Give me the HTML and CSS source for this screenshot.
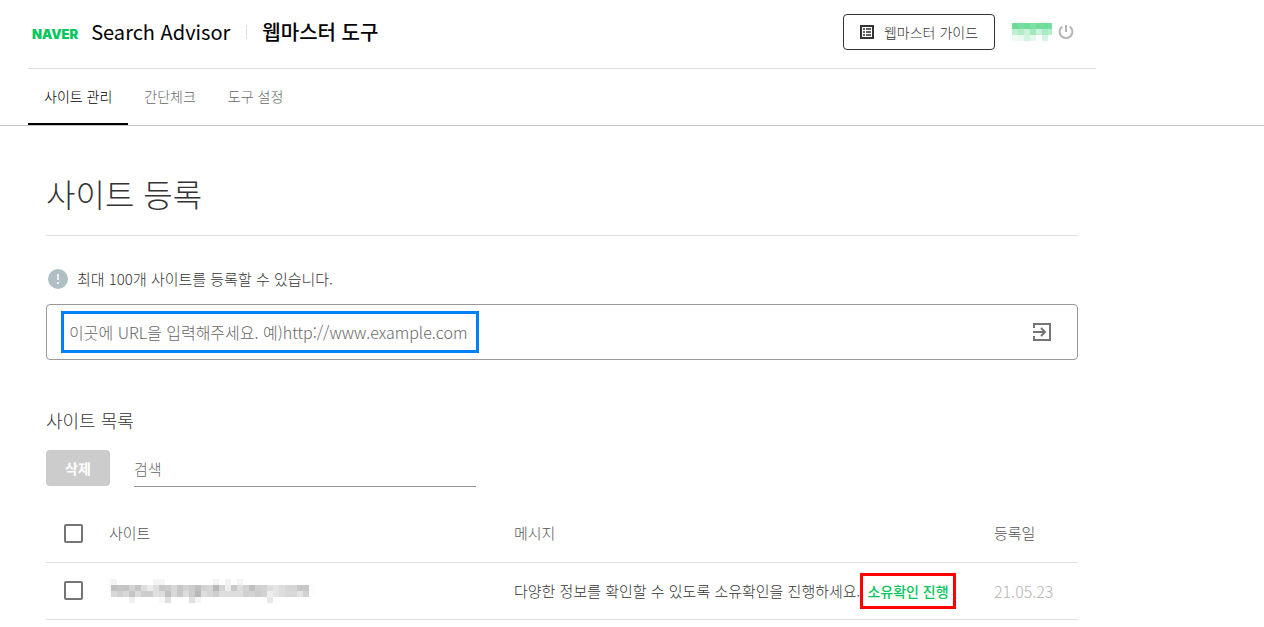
FILE: index.html
```
<!DOCTYPE html>
<html lang="ko">
<head>
    <meta charset="UTF-8">
    <meta name="viewport" content="width=device-width, initial-scale=1.0">
    <title>웹마스터 도구</title>
    <link rel="stylesheet" href="styles.css">
</head>
<body>
<header class="header">
    <div class="top-bar">
        <a class="logo" href="#">NAVER</a>
        <a class="service" href="#">Search Advisor</a>
        <a class="tool-name" href="#">웹마스터 도구</a>
        <button class="guide-btn" type="button">
            <svg width="14" height="14" viewBox="0 0 14 14" fill="none" stroke="#333" stroke-width="2">
                <path d="M1 1h12v12H1z"/>
                <path d="M3 4h2M6 4h5M3 7h2M6 7h5M3 10h2M6 10h5" stroke-width="1.5"/>
            </svg>
            웹마스터 가이드
        </button>
        <svg class="user-name" id="userName" width="40" height="18" viewBox="0 0 40 18" shape-rendering="crispEdges"></svg>
        <button class="power-btn" type="button" aria-label="로그아웃">
            <svg width="16" height="16" viewBox="0 0 16 16" fill="none" stroke="#b5b5b5" stroke-width="2">
                <path d="M8 1v7M4.300 2.500a6.400 6.400 0 1 0 7.400 0"/>
            </svg>
        </button>
    </div>
    <nav class="tabs">
        <a class="tab active" href="#">사이트 관리</a>
        <a class="tab" href="#">간단체크</a>
        <a class="tab" href="#">도구 설정</a>
    </nav>
</header>
<main class="container">
    <h1>사이트 등록</h1>
    <p class="notice">
        <svg width="23" height="22" viewBox="0 0 23 22">
            <circle cx="12" cy="11" r="10" fill="#b0bec5"/>
            <path d="M12 6v6M12 14v2" stroke="#fff" stroke-width="1.5"/>
        </svg>
        최대 100개 사이트를 등록할 수 있습니다.
    </p>
    <form class="url-form">
        <input class="url-input" type="text" aria-label="사이트 URL" placeholder="이곳에 URL을 입력해주세요. 예)http://www.example.com">
        <button class="submit-btn" type="button" aria-label="등록">
            <svg width="20" height="20" viewBox="0 0 20 20" fill="none" stroke="#757575" stroke-width="2">
                <path d="M2 6V2h16v16H2v-4M1 10h12M9 6l4 4-4 4"/>
            </svg>
        </button>
    </form>
    <h2>사이트 목록</h2>
    <div class="list-tools">
        <button class="delete-btn" type="button" disabled>삭제</button>
        <input class="search-input" type="text" aria-label="검색" placeholder="검색">
    </div>
    <table class="site-table">
        <thead>
            <tr>
                <th class="col-check"><input type="checkbox" aria-label="전체 선택"></th>
                <th class="col-site">사이트</th>
                <th class="col-message">메시지</th>
                <th>등록일</th>
            </tr>
        </thead>
        <tbody>
            <tr>
                <td class="col-check"><input type="checkbox" aria-label="사이트 선택"></td>
                <td>
                    <svg id="siteUrl" width="206" height="24" viewBox="4 0 206 24" shape-rendering="crispEdges"></svg>
                </td>
                <td class="message">다양한 정보를 확인할 수 있도록 소유확인을 진행하세요.<a class="verify" href="#">소유확인 진행</a></td>
                <td class="date">21.05.23</td>
            </tr>
        </tbody>
    </table>
</main>
<script>
    // 개인정보 모자이크: '-' 는 빈 칸
    const drawMosaic = (id, rows, toColor) => {
        const size = 6;
        document.getElementById(id).innerHTML = rows.map((row, y) =>
            row.split(' ').map((cell, x) => cell === '-' ? '' :
                `<rect x="${x * size}" y="${y * size}" width="${size}" height="${size}" fill="${toColor(cell)}"/>`
            ).join('')
        ).join('');
    };
    drawMosaic('siteUrl', [
        'fa f3 - - - - - - f5 f5 - - - - - - - - f3 - f3 - f3',
        'f8 c0 c5 c4 d3 c6 dd eb df c8 cc d8 c6 d2 cc bf d2 d6 b8 d4 ee c8 dd d2 c0 d0 d2 dd e5 dd d6 d6 c8 c8 fc',
        'fa d9 d0 d8 c4 dc cc cc e0 dd c0 d9 c8 de cc b8 dd d6 cc dd dd dd dd d0 d2 cc d2 ee e5 dd d8 d8 e4 d2 fd',
        '- - - - f0 - - - - f8 e0 - - - e0 f5 - - - - - - - - - - - e8'
    ], (cell) => '#' + cell + cell + cell);
    drawMosaic('userName', [
        '6dda96 76dea0 6fdc9a 7fe0a7 72dd9d 70dc9b 76dea0',
        'c0f0d3 b0ecc8 c8f2d8 a0e8bd c8f2d8 a8eac4 b4edca',
        'eefbf3 e8faef d0f5df e4f9ec - d4f5e1'
    ], (cell) => '#' + cell);
</script>
</body>
</html>
```
FILE: styles.css
```
* {
    box-sizing: border-box;
}
body {
    margin: 0;
    background: #fff;
    color: #333;
    font-family: 'Noto Sans CJK KR', sans-serif;
    font-weight: 300;
    font-size: 15px;
    line-height: 20px;
}
a {
    color: inherit;
    text-decoration: none;
}
button, input {
    font: inherit;
    color: inherit;
}
button {
    background: none;
    border: none;
    padding: 0;
    cursor: pointer;
}
.header {
    border-bottom: 1px solid #c4c4c4;
}
.top-bar {
    display: flex;
    align-items: center;
    max-width: 1068px;
    height: 69px;
    margin-left: 28px;
    padding: 0 22px 4px 4px;
    border-bottom: 1px solid #e0e0e0;
}
.logo {
    margin-right: 13px;
    padding-top: 4px;
    color: #03c75a;
    font-family: 'Inter', sans-serif;
    font-size: 13px;
    font-weight: 900;
}
.service, .tool-name {
    color: #000;
    font-size: 20px;
    font-weight: 400;
}
.tool-name {
    margin-left: 16px;
    padding-left: 16px;
    background: linear-gradient(#ddd, #ddd) 0 50% / 1px 14px no-repeat;
    font-weight: 500;
}
.guide-btn {
    display: flex;
    align-items: center;
    justify-content: center;
    gap: 10px;
    width: 152px;
    height: 36px;
    margin-left: auto;
    border: 1px solid #333;
    border-radius: 4px;
    font-size: 14px;
}
.user-name {
    margin: 0 6px 0 17px;
}
.power-btn {
    height: 16px;
}
svg {
    display: block;
}
.tabs {
    display: flex;
    margin-left: 28px;
}
.tab {
    height: 56px;
    padding: 17px 16px;
    color: #666;
    font-size: 14px;
}
.tab.active {
    border-bottom: 2px solid #000;
    color: #000;
}
.container {
    max-width: 1078px;
    padding-left: 46px;
}
h1 {
    margin: 0;
    padding: 43px 0 18px;
    border-bottom: 1px solid #e0e0e0;
    font-size: 32px;
    font-weight: 300;
    line-height: 48px;
}
.notice {
    display: flex;
    align-items: center;
    gap: 8px;
    margin: 32px 0 14px;
}
.url-form {
    display: flex;
    align-items: center;
    height: 56px;
    padding: 0 25px 0 14px;
    border: 1px solid #999;
    border-radius: 4px;
}
.url-input {
    width: 418px;
    height: 42px;
    padding: 0 5px;
    border: 3px solid #0080f7;
    font-size: 16px;
}
.submit-btn {
    margin-left: auto;
}
input::placeholder {
    color: #666;
    opacity: 1;
}
h2 {
    margin: 48px 0 18px;
    font-size: 18px;
    font-weight: 300;
    line-height: 24px;
}
.list-tools {
    display: flex;
    gap: 24px;
}
.delete-btn {
    width: 64px;
    height: 36px;
    border-radius: 4px;
    background: #ccc;
    color: #fff;
    font-size: 14px;
    font-weight: 700;
}
.search-input {
    width: 342px;
    height: 37px;
    padding: 0;
    border: none;
    border-bottom: 1px solid #949494;
}
.site-table {
    width: 100%;
    margin-top: 18px;
    border-collapse: collapse;
    table-layout: fixed;
}
th, td {
    height: 57px;
    padding: 0;
    border-bottom: 1px solid #e0e0e0;
    text-align: left;
    font-weight: 300;
}
th {
    color: #555;
}
.col-check {
    width: 63px;
    padding-left: 18px;
}
.col-site {
    width: 405px;
}
.col-message {
    width: 480px;
}
input[type="checkbox"] {
    appearance: none;
    display: block;
    width: 19px;
    height: 19px;
    margin: 0;
    border: 2px solid #757575;
    border-radius: 2px;
}
.message {
    white-space: nowrap;
}
.verify {
    display: inline-block;
    padding: 5px 4px;
    border: 3px solid #f00;
    color: #03c75a;
    font-size: 14px;
    font-weight: 500;
}
.date {
    color: #b5b5b5;
    font-size: 16px;
}
```
